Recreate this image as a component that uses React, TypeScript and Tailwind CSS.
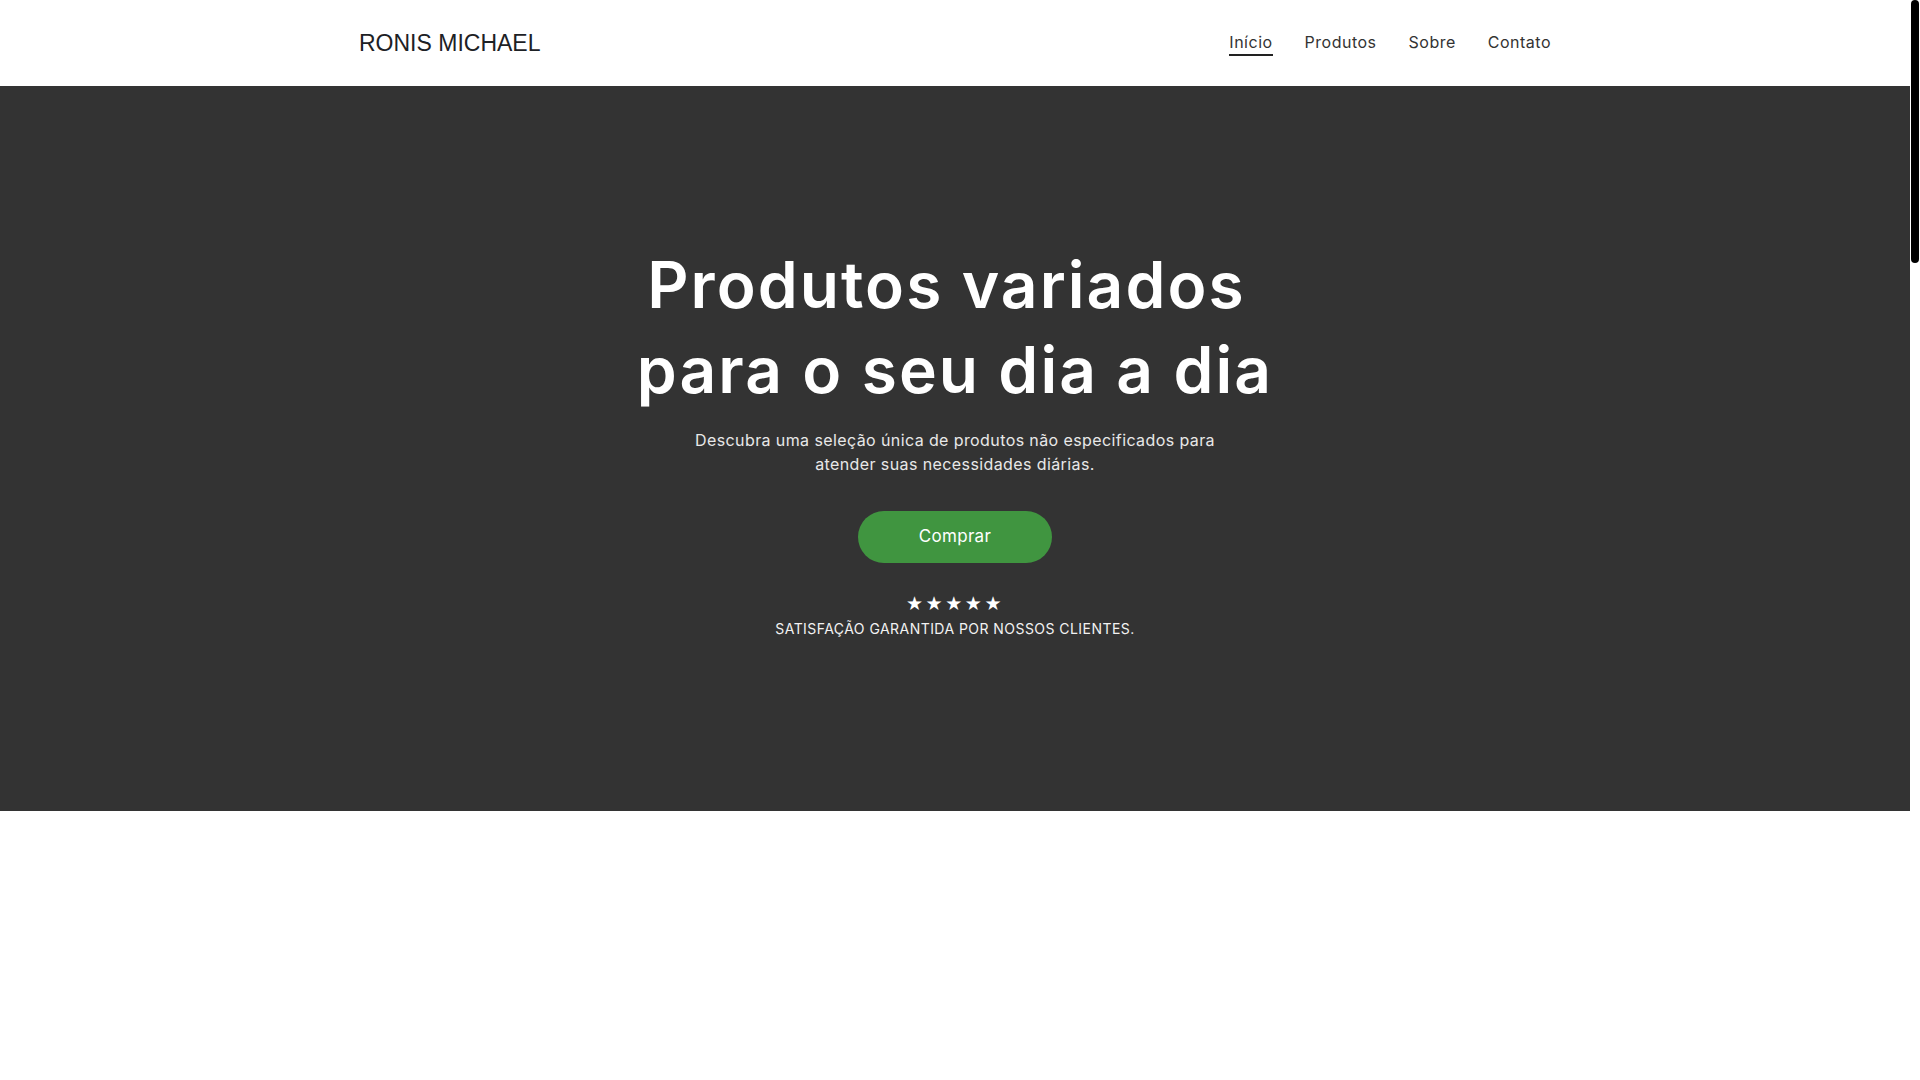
import React from "react";

export default function App() {
  const links = ["Início", "Produtos", "Sobre", "Contato"];
  return (
    <div className="flex h-screen w-full overflow-hidden bg-white">
      <div className="min-w-0 flex-1">
        <header className="h-[86px] bg-white">
          <div className="mx-auto flex h-full w-[1192px] items-center justify-between">
            <div className="font-['Liberation_Sans',Arial,sans-serif] text-[23px] leading-none text-[#1d2125]">
              RONIS MICHAEL
            </div>
            <nav className="flex items-center gap-[32px] pb-[1px] font-['Inter',sans-serif] text-[16px] leading-6 tracking-[0.5px] text-[#333333]">
              {links.map((l, i) => (
                <a
                  key={l}
                  href="#"
                  className={
                    i === 0
                      ? "border-b-2 border-[#222222]"
                      : "border-b-2 border-transparent"
                  }
                >
                  {l}
                </a>
              ))}
            </nav>
          </div>
        </header>

        <section className="flex h-[725px] flex-col items-center bg-[#333333] pt-[156px] text-center font-['Inter',sans-serif]">
          <h1 className="text-[64px] font-semibold leading-[85px] tracking-[2.1px] text-white">
            <span className="pr-[17px]">Produtos variados</span>
            <br />
            para o seu dia a dia
          </h1>
          <p className="mt-[16px] max-w-[550px] text-[16px] leading-6 tracking-[0.4px] text-[#e8e8e8]">
            Descubra uma seleção única de produtos não especificados para atender suas necessidades diárias.
          </p>
          <button className="mt-[35px] h-[52px] w-[194px] rounded-full bg-[#409540] text-[17px] tracking-[0.3px] text-white">
            Comprar
          </button>
          <div className="mt-[26px] font-['DejaVu_Sans',sans-serif] text-[19px] leading-[28px] tracking-[2.6px] text-white">
            ★★★★★
          </div>
          <div className="mt-[1px] text-[14px] leading-[21px] tracking-[0.45px] text-[#f2f2f2]">
            SATISFAÇÃO GARANTIDA POR NOSSOS CLIENTES.
          </div>
        </section>
      </div>

      <div className="flex w-[10px] shrink-0 justify-center bg-white">
        <div className="h-[263px] w-[8px] rounded-full bg-black" />
      </div>
    </div>
  );
}
